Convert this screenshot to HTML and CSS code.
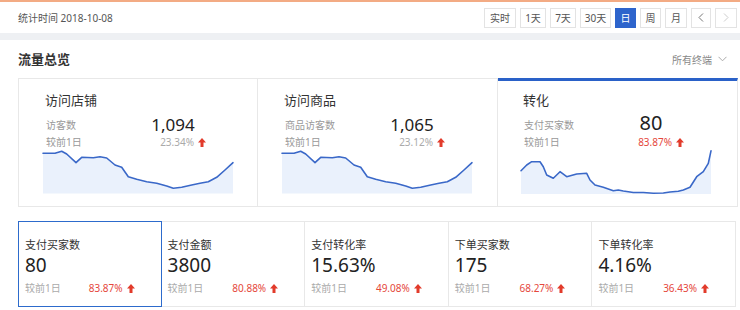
FILE: index.html
```html
<!DOCTYPE html>
<html lang="zh-CN">
<head>
<meta charset="utf-8">
<title>流量总览</title>
<link rel="stylesheet" href="styles.css">
</head>
<body>
<div class="topbar">
  <div class="stat-time">统计时间 2018-10-08</div>
  <div class="btns">
    <span class="btn w32">实时</span>
    <span class="btn w26">1天</span>
    <span class="btn w26">7天</span>
    <span class="btn w31">30天</span>
    <span class="btn w21 active">日</span>
    <span class="btn w21">周</span>
    <span class="btn w22">月</span>
    <span class="btn w20"><svg width="6" height="9" viewBox="0 0 6 9"><path d="M5 0.5 L1 4.5 L5 8.5" fill="none" stroke="#777" stroke-width="1"/></svg></span>
    <span class="btn w22"><svg width="6" height="9" viewBox="0 0 6 9"><path d="M1 0.5 L5 4.5 L1 8.5" fill="none" stroke="#ccc" stroke-width="1"/></svg></span>
  </div>
</div>
<div class="band"></div>
<div class="panel">
  <div class="panel-head">
    <div class="panel-title">流量总览</div>
    <div class="terminal">所有终端 <svg width="9" height="6" viewBox="0 0 9 6"><path d="M0.5 0.8 L4.5 4.8 L8.5 0.8" fill="none" stroke="#aaa" stroke-width="1"/></svg></div>
  </div>

  <div class="cards">
    <div class="card">
      <div class="card-title">访问店铺</div>
      <div class="row">
        <span class="lbl">访客数</span>
        <span class="val">1,094</span>
      </div>
      <div class="row row2">
        <span class="lbl">较前1日</span>
        <span class="pct gray">23.34% <svg class="up" width="8" height="9" viewBox="0 0 8 9"><polygon points="4,0 8,4.5 5.5,4.5 5.5,9 2.5,9 2.5,4.5 0,4.5"/></svg></span>
      </div>
      <svg class="chart" width="190" height="44" viewBox="0 0 190 44">
        <path class="area" d="M0,3.3 L12,3.3 L18.7,1.2 L23.7,4 L33,12.7 L38.7,7.3 L50.3,7.7 L57,6.7 L63.7,8 L72,15 L78.7,17.3 L85.3,26.7 L93.7,29.3 L103.7,31.7 L113.7,33.3 L123.7,36 L130.3,38.3 L138.7,37.3 L148.7,35 L157,33.3 L165.3,31.7 L173.7,27.3 L182,20 L190,12.7 L190,43.5 L0,43.5 Z"/>
        <path class="line" d="M0,3.3 L12,3.3 L18.7,1.2 L23.7,4 L33,12.7 L38.7,7.3 L50.3,7.7 L57,6.7 L63.7,8 L72,15 L78.7,17.3 L85.3,26.7 L93.7,29.3 L103.7,31.7 L113.7,33.3 L123.7,36 L130.3,38.3 L138.7,37.3 L148.7,35 L157,33.3 L165.3,31.7 L173.7,27.3 L182,20 L190,12.7"/>
      </svg>
    </div>
    <div class="card">
      <div class="card-title">访问商品</div>
      <div class="row">
        <span class="lbl">商品访客数</span>
        <span class="val">1,065</span>
      </div>
      <div class="row row2">
        <span class="lbl">较前1日</span>
        <span class="pct gray">23.12% <svg class="up" width="8" height="9" viewBox="0 0 8 9"><polygon points="4,0 8,4.5 5.5,4.5 5.5,9 2.5,9 2.5,4.5 0,4.5"/></svg></span>
      </div>
      <svg class="chart" width="190" height="44" viewBox="0 0 190 44">
        <path class="area" d="M0,3.3 L12,3.3 L18.7,1.2 L23.7,4 L33,12.7 L38.7,7.3 L50.3,7.7 L57,6.7 L63.7,8 L72,15 L78.7,17.3 L85.3,26.7 L93.7,29.3 L103.7,31.7 L113.7,33.3 L123.7,36 L130.3,38.3 L138.7,37.3 L148.7,35 L157,33.3 L165.3,31.7 L173.7,27.3 L182,20 L190,12.7 L190,43.5 L0,43.5 Z"/>
        <path class="line" d="M0,3.3 L12,3.3 L18.7,1.2 L23.7,4 L33,12.7 L38.7,7.3 L50.3,7.7 L57,6.7 L63.7,8 L72,15 L78.7,17.3 L85.3,26.7 L93.7,29.3 L103.7,31.7 L113.7,33.3 L123.7,36 L130.3,38.3 L138.7,37.3 L148.7,35 L157,33.3 L165.3,31.7 L173.7,27.3 L182,20 L190,12.7"/>
      </svg>
    </div>
    <div class="card active">
      <div class="card-title">转化</div>
      <div class="row">
        <span class="lbl">支付买家数</span>
        <span class="val big">80</span>
      </div>
      <div class="row row2">
        <span class="lbl">较前1日</span>
        <span class="pct red">83.87% <svg class="up" width="8" height="9" viewBox="0 0 8 9"><polygon points="4,0 8,4.5 5.5,4.5 5.5,9 2.5,9 2.5,4.5 0,4.5"/></svg></span>
      </div>
      <svg class="chart c3" width="190" height="44" viewBox="0 0 190 44">
        <path class="area" d="M0,20.7 L5.7,15 L10.7,11.7 L19,11.7 L22.3,16.7 L25.7,25 L32.3,28.3 L39,21.7 L45.7,26.7 L55.7,24 L65.7,23.3 L69,30 L74,35 L82.3,37.3 L92.3,40.7 L97.3,40 L102.3,41 L112.3,42.5 L122.3,42.5 L132.3,43.3 L142.3,43 L149,42 L157.3,41.3 L162.3,40 L169,37.3 L175.7,26.7 L182.3,21.7 L187.3,13.3 L190,0.8 L190,44 L0,44 Z"/>
        <path class="line" d="M0,20.7 L5.7,15 L10.7,11.7 L19,11.7 L22.3,16.7 L25.7,25 L32.3,28.3 L39,21.7 L45.7,26.7 L55.7,24 L65.7,23.3 L69,30 L74,35 L82.3,37.3 L92.3,40.7 L97.3,40 L102.3,41 L112.3,42.5 L122.3,42.5 L132.3,43.3 L142.3,43 L149,42 L157.3,41.3 L162.3,40 L169,37.3 L175.7,26.7 L182.3,21.7 L187.3,13.3 L190,0.8"/>
      </svg>
    </div>
  </div>

  <div class="metrics">
    <div class="metric active">
      <div class="m-lbl">支付买家数</div>
      <div class="m-val">80</div>
      <div class="m-foot"><span>较前1日</span><span class="red">83.87% <svg class="up" width="8" height="9" viewBox="0 0 8 9"><polygon points="4,0 8,4.5 5.5,4.5 5.5,9 2.5,9 2.5,4.5 0,4.5"/></svg></span></div>
    </div>
    <div class="metric">
      <div class="m-lbl">支付金额</div>
      <div class="m-val">3800</div>
      <div class="m-foot"><span>较前1日</span><span class="red">80.88% <svg class="up" width="8" height="9" viewBox="0 0 8 9"><polygon points="4,0 8,4.5 5.5,4.5 5.5,9 2.5,9 2.5,4.5 0,4.5"/></svg></span></div>
    </div>
    <div class="metric">
      <div class="m-lbl">支付转化率</div>
      <div class="m-val">15.63%</div>
      <div class="m-foot"><span>较前1日</span><span class="red">49.08% <svg class="up" width="8" height="9" viewBox="0 0 8 9"><polygon points="4,0 8,4.5 5.5,4.5 5.5,9 2.5,9 2.5,4.5 0,4.5"/></svg></span></div>
    </div>
    <div class="metric">
      <div class="m-lbl">下单买家数</div>
      <div class="m-val">175</div>
      <div class="m-foot"><span>较前1日</span><span class="red">68.27% <svg class="up" width="8" height="9" viewBox="0 0 8 9"><polygon points="4,0 8,4.5 5.5,4.5 5.5,9 2.5,9 2.5,4.5 0,4.5"/></svg></span></div>
    </div>
    <div class="metric">
      <div class="m-lbl">下单转化率</div>
      <div class="m-val">4.16%</div>
      <div class="m-foot"><span>较前1日</span><span class="red">36.43% <svg class="up" width="8" height="9" viewBox="0 0 8 9"><polygon points="4,0 8,4.5 5.5,4.5 5.5,9 2.5,9 2.5,4.5 0,4.5"/></svg></span></div>
    </div>
  </div>
</div>
</body>
</html>
```

FILE: styles.css
```css
* { box-sizing: border-box; }
html, body { margin: 0; padding: 0; background: #fff; }
body {
  font-family: "Noto Sans", "Noto Sans CJK SC", sans-serif;
  color: #333;
  width: 740px;
  height: 310px;
  overflow: hidden;
}

.topbar {
  border-top: 2px solid #f3ab84;
  height: 33px;
  display: flex;
  align-items: center;
  justify-content: space-between;
  padding: 0 3px 0 18px;
  background: #fff;
}
.stat-time {
  font-size: 10px;
  color: #555;
  line-height: 14px;
}
.btns { display: flex; gap: 4px; }
.btn {
  height: 20px;
  border: 1px solid #e3e3e3;
  display: flex;
  align-items: center;
  justify-content: center;
  font-size: 10px;
  color: #555;
  background: #fff;
}
.btn.active { background: #2d64cc; border-color: #2d64cc; color: #fff; }
.w20 { width: 20px; }
.w21 { width: 21px; }
.w22 { width: 22px; }
.w26 { width: 26px; }
.w31 { width: 31px; }
.w32 { width: 32px; }

.band { height: 7px; background: #eef0f3; }

.panel { padding: 0 2px 0 18px; }
.panel-head {
  height: 38px;
  display: flex;
  align-items: center;
  justify-content: space-between;
  padding-right: 11px;
}
.panel-title { font-size: 13px; font-weight: bold; color: #333; line-height: 18px; }
.terminal {
  font-size: 10px;
  color: #888;
  display: flex;
  align-items: center;
  gap: 6px;
}

.cards {
  display: grid;
  grid-template-columns: 240px 240px 240px;
}
.card {
  height: 129px;
  border: 1px solid #e8e8e8;
  border-left: none;
  padding: 12px 0 0 24px;
  display: flex;
  flex-direction: column;
}
.card:first-child { border-left: 1px solid #e8e8e8; padding-left: 24px; }
.card:nth-child(2) { padding-left: 24px; }
.card.active { border-top: 3px solid #2a61c8; padding-top: 10px; padding-left: 23px; }
.card-title {
  font-size: 13px;
  line-height: 18px;
  color: #333;
  margin-left: 2px;
}
.row {
  display: flex;
  align-items: center;
  margin-left: 3px;
  margin-top: 6px;
  height: 20px;
}
.row2 { margin-top: 0; height: 14px; }
.lbl { width: 94px; font-size: 10px; color: #999; line-height: 14px; }
.val {
  width: 66px;
  text-align: center;
  font-size: 17px;
  line-height: 20px;
  color: #222;
}
.val.big { font-size: 20px; margin-top: -5px; }
.pct {
  width: 66px;
  font-size: 10px;
  line-height: 14px;
  display: flex;
  justify-content: flex-end;
  align-items: center;
  gap: 4px;
}
.gray { color: #aaa; }
.red { color: #e5473c; }
.up { fill: #e23b2b; display: block; }
.chart { display: block; margin-top: 1px; overflow: visible; }
.chart .area { fill: #eaf1fc; }
.chart .line { fill: none; stroke: #3a68c8; stroke-width: 1.6; stroke-linejoin: round; stroke-linecap: round; }

.metrics {
  margin-top: 14px;
  margin-right: 2px;
  display: grid;
  grid-template-columns: repeat(5, 1fr);
}
.metric {
  height: 86px;
  border: 1px solid #e8e8e8;
  border-left: none;
  padding: 15px 26px 0 6px;
}
.metric:first-child { border-left: 1px solid #e8e8e8; }
.metric.active { border: 1px solid #2d6bcc; }
.m-lbl { font-size: 11px; line-height: 16px; color: #333; }
.m-val { font-size: 19px; line-height: 22px; color: #222; margin-top: 1px; }
.m-foot {
  margin-top: 5px;
  display: flex;
  justify-content: space-between;
  align-items: center;
  font-size: 10px;
  line-height: 14px;
  color: #aaa;
}
.m-foot .red { display: flex; align-items: center; gap: 4px; }
```
